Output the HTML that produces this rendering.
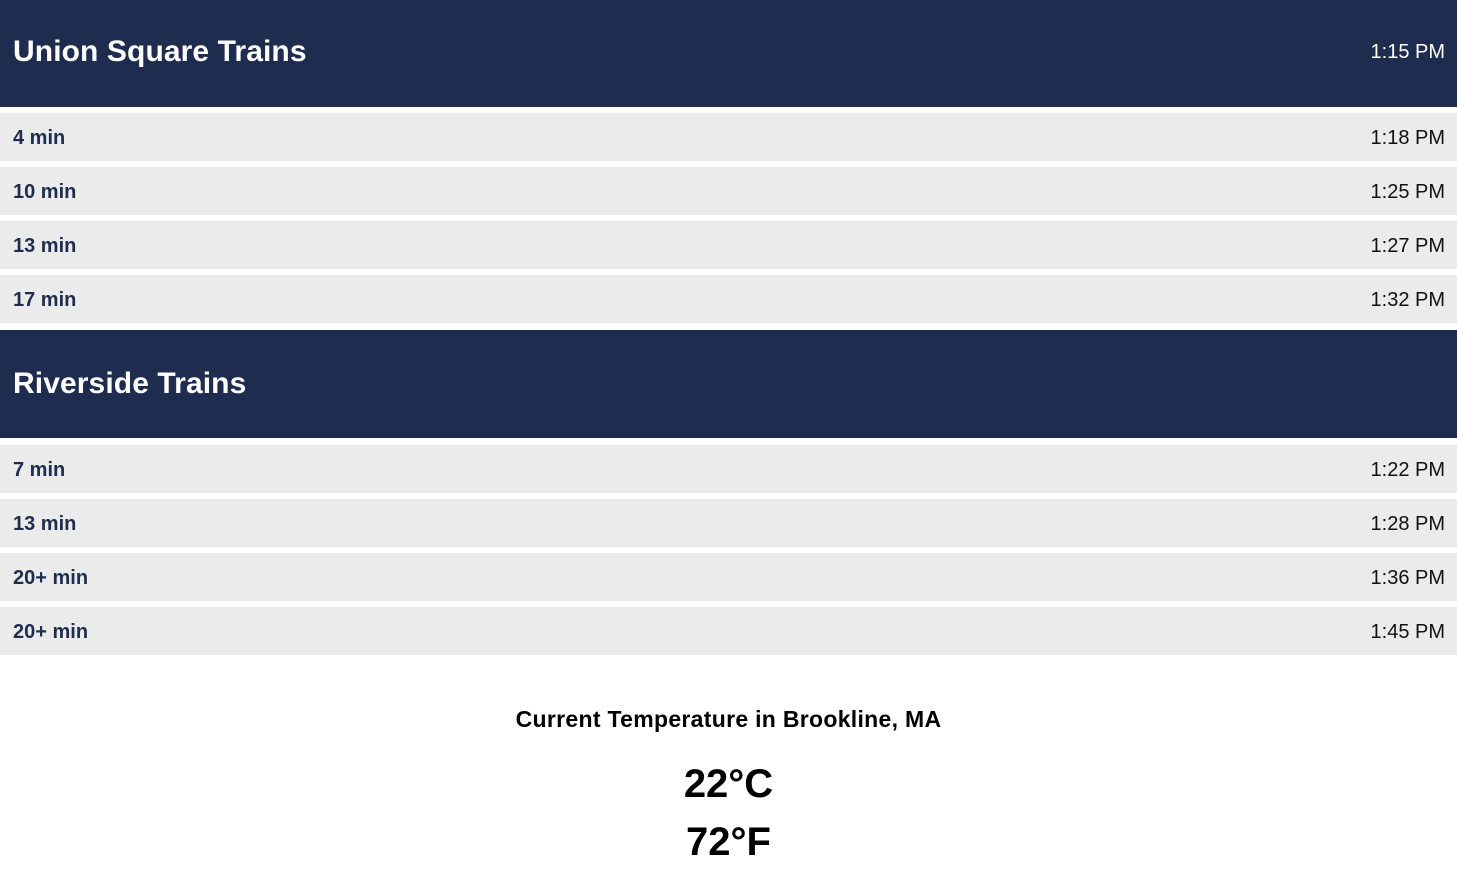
<!DOCTYPE html>
<html><head><style>
body{margin:0;background:#fff;font-family:"Liberation Sans",Arial,sans-serif;width:1457px;height:870px;overflow:hidden;position:relative}
.h{position:absolute;left:0;width:1457px;background:#1e2d4f;color:#fff}
.h .t{position:absolute;left:13px;font-size:30px;font-weight:bold;letter-spacing:0.1px}
.h .c{position:absolute;right:12px;font-size:20px}
.r{position:absolute;left:0;width:1457px;height:48px;background:#ebebeb}
.r .m{position:absolute;left:13px;top:14px;font-size:20px;font-weight:bold;color:#1e2d4f}
.r .c{position:absolute;right:12px;top:14px;font-size:20px;color:#111}
.w{position:absolute;left:0;width:1457px;text-align:center;color:#000;font-weight:bold}
</style></head><body>
<div class="h" style="top:0;height:107px"><div class="t" style="top:35px">Union Square Trains</div><div class="c" style="top:41px">1:15 PM</div></div>
<div class="r" style="top:113px"><div class="m">4 min</div><div class="c">1:18 PM</div></div>
<div class="r" style="top:167px"><div class="m">10 min</div><div class="c">1:25 PM</div></div>
<div class="r" style="top:221px"><div class="m">13 min</div><div class="c">1:27 PM</div></div>
<div class="r" style="top:275px"><div class="m">17 min</div><div class="c">1:32 PM</div></div>
<div class="h" style="top:330px;height:108px"><div class="t" style="top:37px">Riverside Trains</div></div>
<div class="r" style="top:445px"><div class="m">7 min</div><div class="c">1:22 PM</div></div>
<div class="r" style="top:499px"><div class="m">13 min</div><div class="c">1:28 PM</div></div>
<div class="r" style="top:553px"><div class="m">20+ min</div><div class="c">1:36 PM</div></div>
<div class="r" style="top:607px"><div class="m">20+ min</div><div class="c">1:45 PM</div></div>
<div class="w" style="top:706px;font-size:23px;letter-spacing:0.3px">Current Temperature in Brookline, MA</div>
<div class="w" style="top:762px;font-size:40px">22°C</div>
<div class="w" style="top:820px;font-size:40px">72°F</div>
</body></html>
